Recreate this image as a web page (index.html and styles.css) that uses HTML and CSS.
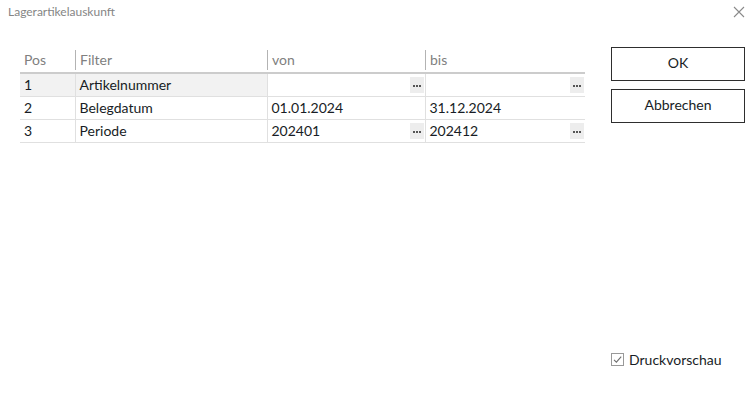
FILE: index.html
```html
<!DOCTYPE html>
<html lang="de">

<head>
  <meta charset="UTF-8">
  <title>Lagerartikelauskunft</title>
  <link rel="stylesheet" href="styles.css">
</head>

<body>
  <section class="dialog">
    <header class="titlebar">
      <span class="title">Lagerartikelauskunft</span>
      <svg class="close" width="12" height="12" viewBox="0 0 12 12">
        <path d="M1 1 L11 11 M11 1 L1 11" stroke="#8a8a8a" stroke-width="1.1" fill="none" />
      </svg>
    </header>

    <div class="content">
      <table class="grid">
        <thead>
          <tr>
            <th class="c-pos"><span>Pos</span></th>
            <th class="c-filter"><span>Filter</span></th>
            <th class="c-von"><span>von</span></th>
            <th class="c-bis"><span>bis</span></th>
          </tr>
        </thead>
        <tbody>
          <tr>
            <td class="shade">1</td>
            <td class="shade">Artikelnummer</td>
            <td><div class="cell"><span></span><i class="more"><svg width="14" height="16" viewBox="0 0 14 16"><path d="M3 8h2v2H3zM6 8h2v2H6zM9 8h2v2H9z" fill="#555" /></svg></i></div></td>
            <td><div class="cell"><span></span><i class="more"><svg width="14" height="16" viewBox="0 0 14 16"><path d="M3 8h2v2H3zM6 8h2v2H6zM9 8h2v2H9z" fill="#555" /></svg></i></div></td>
          </tr>
          <tr>
            <td>2</td>
            <td>Belegdatum</td>
            <td><div class="cell"><span>01.01.2024</span></div></td>
            <td><div class="cell"><span>31.12.2024</span></div></td>
          </tr>
          <tr>
            <td>3</td>
            <td>Periode</td>
            <td><div class="cell"><span>202401</span><i class="more"><svg width="14" height="16" viewBox="0 0 14 16"><path d="M3 8h2v2H3zM6 8h2v2H6zM9 8h2v2H9z" fill="#555" /></svg></i></div></td>
            <td><div class="cell"><span>202412</span><i class="more"><svg width="14" height="16" viewBox="0 0 14 16"><path d="M3 8h2v2H3zM6 8h2v2H6zM9 8h2v2H9z" fill="#555" /></svg></i></div></td>
          </tr>
        </tbody>
      </table>

      <div class="side">
        <div class="actions">
          <button>OK</button>
          <button>Abbrechen</button>
        </div>
        <label class="check">
          <span class="box">
            <svg width="11" height="11" viewBox="0 0 11 11">
              <path d="M2 5.8 L4.4 8.2 L9.2 2.6" stroke="#6e6e6e" stroke-width="1.1" fill="none" />
            </svg>
          </span>
          Druckvorschau
        </label>
      </div>
    </div>
  </section>
</body>

</html>
```

FILE: styles.css
```css
* {
  margin: 0;
  padding: 0;
  box-sizing: border-box;
  font-family: "Lato", "Open Sans", sans-serif;

  --text-color: hsl(220, 20%, 12%);
  --head-color: hsl(0, 0%, 50%);
  --line-color: hsl(0, 0%, 88%);
}

body {
  background-color: white;
  width: 746px;
  height: 394px;
  overflow: hidden;
}

.dialog {
  display: flex;
  flex-direction: column;
  height: 100%;
}

.titlebar {
  display: flex;
  justify-content: space-between;
  align-items: center;
  height: 24px;
  padding: 0 1px 0 8px;
}

.title {
  color: hsl(0, 0%, 52%);
  font-size: 12px;
  margin-top: -1px;
}

.close {
  margin-top: -1px;
}

.content {
  flex: 1;
  display: flex;
  padding: 24px 0 0 20px;
}

.grid {
  border-collapse: collapse;
  width: 565px;
  height: fit-content;
  font-size: 14px;
  color: var(--text-color);
}

.c-pos { width: 55px; }
.c-filter { width: 192px; }
.c-von { width: 158px; }
.c-bis { width: 160px; }

.grid th {
  font-weight: normal;
  text-align: left;
  color: var(--head-color);
  height: 25px;
  padding: 0;
  border-bottom: 2px solid hsl(0, 0%, 80%);
}

.grid th span {
  display: block;
  padding-left: 4px;
  line-height: 20px;
}

.grid th + th span {
  border-left: 1px solid hsl(0, 0%, 70%);
}

.grid td {
  height: 23px;
  padding: 0 4px;
  border-bottom: 1px solid var(--line-color);
  border-left: 1px solid var(--line-color);
}

.grid td:first-child {
  border-left: none;
}

.grid td.shade {
  background-color: hsl(0, 0%, 95%);
}

.cell {
  display: flex;
  justify-content: space-between;
  align-items: center;
}

.more {
  display: block;
  width: 14px;
  height: 16px;
  margin-right: -3px;
  background-color: hsl(0, 0%, 93%);
}

.more svg {
  display: block;
}

.side {
  flex: 1;
  display: flex;
  flex-direction: column;
  justify-content: space-between;
  padding: 0 1px 26px 26px;
}

.actions {
  display: flex;
  flex-direction: column;
  gap: 8px;
  margin-top: -1px;
}

button {
  background-color: white;
  border: 1px solid hsl(0, 0%, 18%);
  height: 34px;
  font-size: 14px;
  color: var(--text-color);
  padding-bottom: 3px;
}

.check {
  display: flex;
  align-items: center;
  gap: 5px;
  font-size: 14px;
  color: var(--text-color);
}

.box {
  width: 13px;
  height: 13px;
  border: 1px solid hsl(0, 0%, 60%);
  display: grid;
  place-content: center;
}
```
